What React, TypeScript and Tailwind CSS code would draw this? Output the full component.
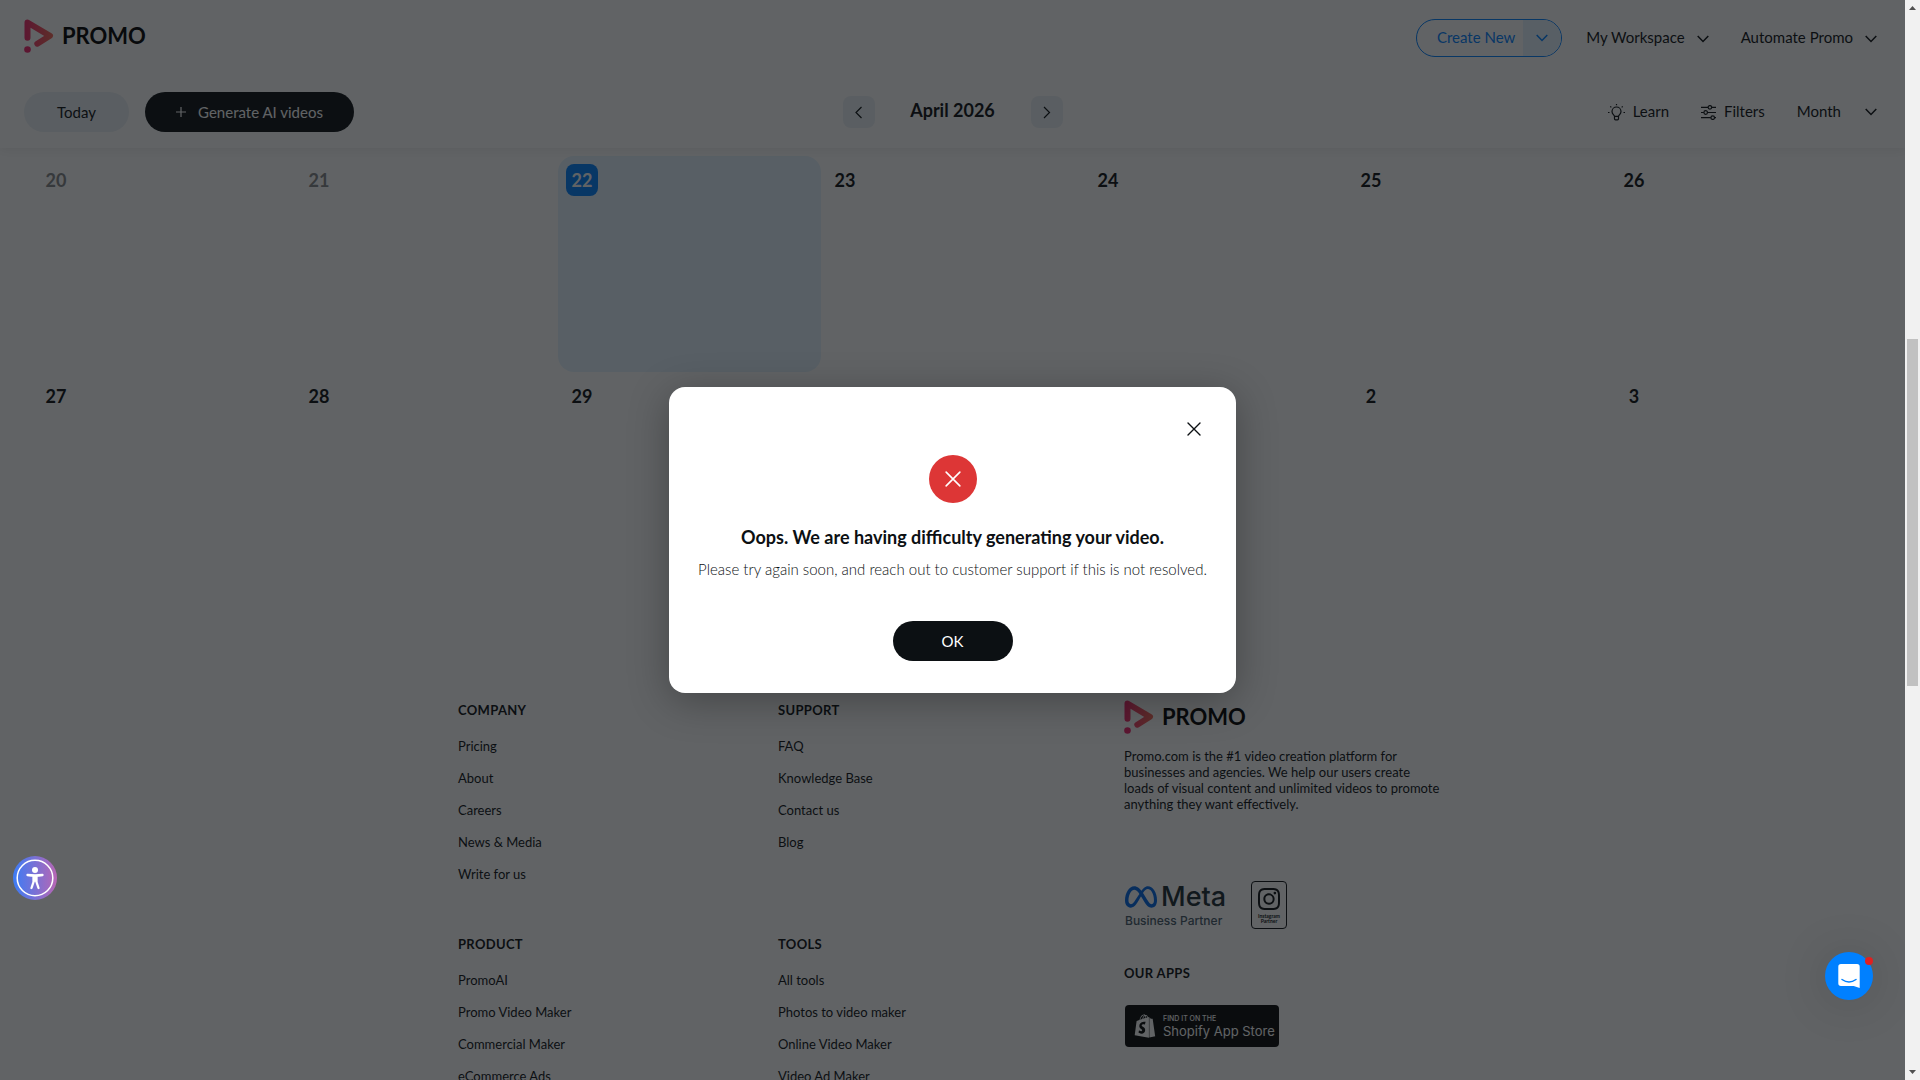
import React, { useState } from "react";
import { FaShopify } from "react-icons/fa";
import { SiInstagram, SiMeta } from "react-icons/si";

/* ---------------------------------- data ---------------------------------- */
const weeks = [
  [20, 21, 22, 23, 24, 25, 26],
  [27, 28, 29, 30, 1, 2, 3],
];

const footerLinks = {
  company: ["Pricing", "About", "Careers", "News & Media", "Write for us"],
  support: ["FAQ", "Knowledge Base", "Contact us", "Blog"],
  product: ["PromoAI", "Promo Video Maker", "Commercial Maker", "eCommerce Ads"],
  tools: ["All tools", "Photos to video maker", "Online Video Maker", "Video Ad Maker"],
};

export default function App() {
  const [showError, setShowError] = useState(true);

  return (
    <div className="flex h-screen overflow-hidden bg-white font-[Lato,sans-serif] text-[#0c1013]">
      <div className="relative min-w-0 flex-1 overflow-hidden">
        <Header />
        <Calendar />
        <Footer />

        {showError && <ErrorDialog onClose={() => setShowError(false)} />}
        <AccessibilityButton />
        <ChatButton />
      </div>
      <ScrollRail />
    </div>
  );
}

/* --------------------------------- header --------------------------------- */
function Header() {
  return (
    <header className="relative h-[148px] bg-white px-6 text-[15px] leading-5 shadow-[0_2px_10px_rgba(0,0,0,0.08)]">
      <div className="flex h-[76px] items-center justify-between">
        <div className="pb-1">
          <Logo />
        </div>
        <div className="flex items-center">
          <div className="mr-6 flex h-[38px] overflow-hidden rounded-full border border-[#0080ff] text-[#0080ff]">
            <button className="pr-2 pb-[2px] pl-5">Create New</button>
            <button aria-label="More create options" className="flex w-[38px] items-center justify-center bg-[#e5f2ff]">
              <Chevron />
            </button>
          </div>
          <button className="mr-8 flex items-center gap-3">
            <span className="pb-[2px]">My Workspace</span>
            <Chevron className="mt-[2px]" />
          </button>
          <button className="mr-1 flex items-center gap-3">
            <span className="pb-[2px]">Automate Promo</span>
            <Chevron className="mt-[2px]" />
          </button>
        </div>
      </div>

      <div className="grid h-[72px] grid-cols-[1fr_auto_1fr] items-center">
        <div className="flex gap-4">
          <button className="h-10 w-[105px] rounded-full bg-[#eaf1f5]">Today</button>
          <button className="flex h-10 w-[209px] items-center justify-center gap-3 rounded-full bg-[#0c1013] text-white">
            <svg width="10" height="10" viewBox="0 0 10 10" stroke="currentColor" strokeWidth="1.2">
              <path d="M5 0v10M0 5h10" />
            </svg>
            Generate AI videos
          </button>
        </div>
        <div className="flex items-center">
          <button aria-label="Previous month" className="flex size-8 items-center justify-center rounded-lg bg-[#eaf1f5]">
            <svg width="8" height="13" viewBox="0 0 8 13" fill="none" stroke="currentColor" strokeWidth="1.2">
              <path d="M6.500 1 1 6.500 6.500 12" />
            </svg>
          </button>
          <h1 className="w-[156px] pb-1 text-center text-lg font-bold">April 2026</h1>
          <button aria-label="Next month" className="flex size-8 items-center justify-center rounded-lg bg-[#eaf1f5]">
            <svg width="8" height="13" viewBox="0 0 8 13" fill="none" stroke="currentColor" strokeWidth="1.2">
              <path d="M1 1 6.500 6.500 1 12" />
            </svg>
          </button>
        </div>
        <div className="flex items-center justify-end">
          <button className="mr-8 flex items-center gap-2">
            <BulbIcon />
            <span className="pb-[2px]">Learn</span>
          </button>
          <button className="mr-8 flex items-center gap-2">
            <SlidersIcon />
            <span className="pb-[2px]">Filters</span>
          </button>
          <button className="mr-1 flex items-center gap-6">
            <span className="pb-[2px]">Month</span>
            <Chevron />
          </button>
        </div>
      </div>
    </header>
  );
}

function Logo() {
  return (
    <a href="#" className="flex items-center gap-2" aria-label="Promo">
      <svg width="30" height="34" viewBox="0 0 30 34" fill="none">
        <defs>
          <linearGradient id="promo" x1="0" y1="0" x2="30" y2="0" gradientUnits="userSpaceOnUse">
            <stop stopColor="#f0246b" />
            <stop offset="1" stopColor="#f56a55" />
          </linearGradient>
        </defs>
        <path
          d="M3.500 18.800V3.500L26 16.800 13.300 24.700"
          stroke="url(#promo)"
          strokeWidth="6"
          strokeLinecap="round"
          strokeLinejoin="round"
        />
        <circle cx="3.500" cy="30.500" r="3.300" fill="#f0246b" />
      </svg>
      <span className="text-[22px] leading-8 font-bold text-black">PROMO</span>
    </a>
  );
}

function Chevron({ className }: { className?: string }) {
  return (
    <svg className={className} width="12" height="8" viewBox="0 0 12 8" fill="none" stroke="currentColor" strokeWidth="1.500">
      <path d="M.7 1 6 6.500 11.300 1" />
    </svg>
  );
}

function BulbIcon() {
  return (
    <svg width="17" height="17" viewBox="0 0 17 17" fill="none" stroke="currentColor" strokeWidth="1.2">
      <path d="M6.500 12.300C6.500 11 4 10.300 4 7.500a4.500 4.500 0 0 1 9 0c0 2.800-2.500 3.500-2.500 4.800zM6.500 12.300v2.500q0 1 1 1h2q1 0 1-1v-2.500" />
      <path d="M8.500 0v1.300M0 8.500h1.500M15.500 8.500H17M2.300 2.300l1 1M14.700 2.300l-1 1" />
    </svg>
  );
}

function SlidersIcon() {
  return (
    <svg width="15" height="15" viewBox="0 0 16 16" fill="none" stroke="currentColor" strokeWidth="1.3">
      <path d="M0 2.500h7.500M11.500 2.500H16M0 8h3M7 8h9M0 13.500h10.500M14.500 13.500H16" />
      <circle cx="9.500" cy="2.500" r="1.900" />
      <circle cx="5" cy="8" r="1.900" />
      <circle cx="12.500" cy="13.500" r="1.900" />
    </svg>
  );
}

/* -------------------------------- calendar -------------------------------- */
function Calendar() {
  return (
    <main className="px-8 pt-2">
      {weeks.map((days, week) => (
        <div key={week} className="grid h-[216px] grid-cols-7">
          {days.map((day) => {
            const isToday = day === 22;
            const isPast = day === 20 || day === 21;
            return (
              <div key={day} className={isToday ? "rounded-2xl bg-[#e5f4ff] p-2" : "p-2"}>
                <div
                  className={
                    isToday
                      ? "flex size-8 items-center justify-center rounded-lg bg-[#0080ff] text-lg font-bold text-white"
                      : isPast
                        ? "flex size-8 items-center justify-center text-lg font-bold text-[#858789]"
                        : "flex size-8 items-center justify-center text-lg font-bold"
                  }
                >
                  {day}
                </div>
              </div>
            );
          })}
        </div>
      ))}
    </main>
  );
}

/* --------------------------------- footer --------------------------------- */
function Footer() {
  return (
    <footer className="mx-auto mt-28 grid max-w-[989px] grid-cols-[320px_346px_1fr] text-[13px] leading-4">
      <div className="flex flex-col gap-12">
        <LinkGroup title="COMPANY" links={footerLinks.company} />
        <LinkGroup title="PRODUCT" links={footerLinks.product} />
      </div>
      <div className="flex flex-col gap-12">
        <LinkGroup title="SUPPORT" links={footerLinks.support} />
        <LinkGroup title="TOOLS" links={footerLinks.tools} />
      </div>
      <div>
        <Logo />
        <p className="mt-[14px]">
          Promo.com is the #1 video creation platform for
          <br />
          businesses and agencies. We help our users create
          <br />
          loads of visual content and unlimited videos to promote
          <br />
          anything they want effectively.
        </p>
        <div className="mt-[69px] ml-px flex items-start gap-6">
          <div className="flex h-12 w-[102px] flex-col">
            <div className="flex items-center gap-1 text-[#1c2b33]">
              <SiMeta className="size-8 text-[#0068e8]" />
              <span className="font-[Inter,sans-serif] text-[27px] leading-8 font-medium">Meta</span>
            </div>
            <span className="font-[Inter,sans-serif] text-xs leading-4 font-medium whitespace-nowrap text-[#475a69]">
              Business Partner
            </span>
          </div>
          <div className="flex h-12 w-9 flex-col items-center rounded-sm border border-[#0c1013] pt-[6px] text-center text-[5px] leading-[5px] font-bold">
            <SiInstagram className="mb-1 size-[22px]" />
            Instagram
            <br />
            Partner
          </div>
        </div>
        <h2 className="mt-9 text-[13px] leading-4 font-bold tracking-wide">OUR APPS</h2>
        <a href="#" className="mt-6 ml-px flex h-[42px] w-[154px] items-center gap-[6px] rounded-sm bg-[#060708] pl-2 text-white">
          <FaShopify className="size-6 shrink-0" />
          <span className="flex flex-col font-[Inter,sans-serif]">
            <span className="text-[7px] leading-[9px] font-medium">FIND IT ON THE</span>
            <span className="text-[13px] leading-4 whitespace-nowrap">Shopify App Store</span>
          </span>
        </a>
      </div>
    </footer>
  );
}

function LinkGroup({ title, links }: { title: string; links: string[] }) {
  return (
    <section className="h-[186px] pt-[2px]">
      <h2 className="text-[13px] leading-4 font-bold tracking-wide">{title}</h2>
      <ul className="mt-5 flex flex-col gap-4">
        {links.map((link) => (
          <li key={link}>
            <a href="#">{link}</a>
          </li>
        ))}
      </ul>
    </section>
  );
}

/* --------------------------------- dialog --------------------------------- */
function ErrorDialog({ onClose }: { onClose: () => void }) {
  return (
    <div className="absolute inset-0 z-10 flex items-center justify-center bg-[#0c0f12]/65">
      <div
        role="alertdialog"
        aria-labelledby="error-title"
        aria-describedby="error-text"
        className="flex w-[567px] flex-col items-center rounded-2xl bg-white p-8 shadow-[0_8px_40px_rgba(0,0,0,0.3)]"
      >
        <button onClick={onClose} aria-label="Close" className="flex size-5 items-center justify-center self-end">
          <Cross />
        </button>
        <div className="mt-4 flex size-12 items-center justify-center rounded-full bg-[#dd3636] text-white">
          <Cross large />
        </div>
        <h2 id="error-title" className="mt-[22px] text-lg leading-6 font-bold">
          Oops. We are having difficulty generating your video.
        </h2>
        <p id="error-text" className="mt-2 text-[15px] leading-6 font-light whitespace-nowrap">
          Please try again soon, and reach out to customer support if this is not resolved.
        </p>
        <button onClick={onClose} className="mt-10 h-10 w-[120px] rounded-full bg-[#0c1013] text-[15px] leading-5 text-white">
          OK
        </button>
      </div>
    </div>
  );
}

function Cross({ large }: { large?: boolean }) {
  return (
    <svg className={large ? "size-4" : "size-[14px]"} viewBox="0 0 14 14" stroke="currentColor" strokeWidth="1.400" strokeLinecap="round">
      <path d="M1 1 13 13M13 1 1 13" />
    </svg>
  );
}

/* ---------------------------- floating controls ---------------------------- */
function AccessibilityButton() {
  return (
    <button aria-label="Accessibility menu" className="absolute bottom-[180px] left-[13px] z-20 size-11 rounded-full">
      <svg width="44" height="44" viewBox="0 0 44 44">
        <defs>
          <linearGradient id="a11y">
            <stop stopColor="#3b7cf6" />
            <stop offset="1" stopColor="#b866b4" />
          </linearGradient>
        </defs>
        <circle cx="22" cy="22" r="22" fill="url(#a11y)" />
        <circle cx="22" cy="22" r="17.800" fill="none" stroke="#fff" strokeWidth="1.500" />
        <circle cx="22" cy="14" r="3" fill="#fff" />
        <path
          d="M14.500 19q7.500 1 15 0M22 19.500v5M20.500 19.500v6.500l-2 6M23.500 19.500v6.500l2 6"
          fill="none"
          stroke="#fff"
          strokeWidth="2.300"
          strokeLinecap="round"
          strokeLinejoin="round"
        />
      </svg>
    </button>
  );
}

function ChatButton() {
  return (
    <button
      aria-label="Open chat"
      className="absolute right-8 bottom-20 z-20 size-12 rounded-full bg-[#0080ff] shadow-[0_2px_50px_rgba(0,0,0,0.16)]"
    >
      <svg width="48" height="48" viewBox="0 0 48 48" fill="none">
        <path d="M16 12h16q2.700 0 2.700 2.700V36l-6-2H16q-2.700 0-2.700-2.700V14.700Q13.300 12 16 12z" fill="#fff" />
        <path d="M17 27.500q7 5 14 0" stroke="#0080ff" strokeWidth="1.500" strokeLinecap="round" />
      </svg>
      <span className="absolute top-[5px] right-0 size-2 rounded-full bg-[#e02020]" />
    </button>
  );
}

function ScrollRail() {
  return (
    <div className="flex w-[15px] shrink-0 flex-col items-center bg-[#f1f1f1]">
      <svg width="15" height="15" viewBox="0 0 15 15" fill="#505050">
        <path d="M4 10h7L7.500 6z" />
      </svg>
      <div className="mt-[324px] h-[347px] w-[11px] bg-[#c1c1c1]" />
      <svg className="mt-auto" width="15" height="15" viewBox="0 0 15 15" fill="#505050">
        <path d="M4 5h7L7.500 9z" />
      </svg>
    </div>
  );
}
